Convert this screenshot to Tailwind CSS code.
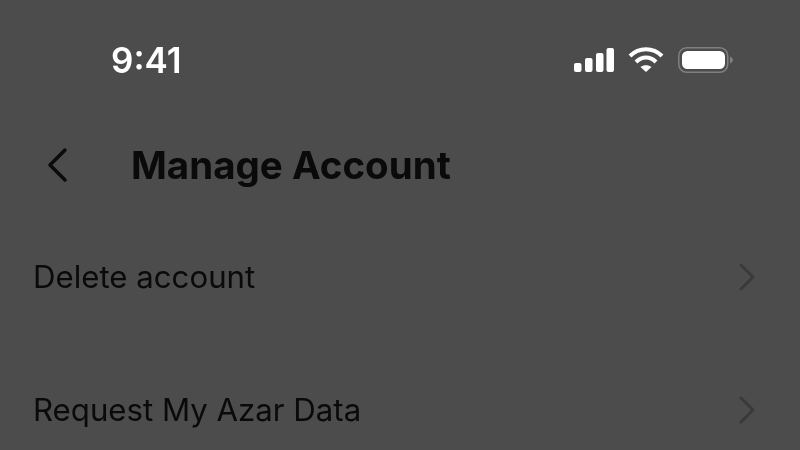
<!DOCTYPE html>
<html lang="en">
<head>
  <meta charset="UTF-8">
  <title>Manage Account</title>
  <script src="https://cdn.jsdelivr.net/npm/@tailwindcss/browser@4"></script>
</head>
<body class="w-[800px] h-[450px] overflow-hidden bg-[#4c4c4c] font-['Inter',sans-serif]">
  <div class="blur-[0.5px]">
    <!-- status bar -->
    <div class="flex items-center justify-between h-[40px] mt-[40px] pl-[111px] pr-[66px]">
      <span class="text-[35px] leading-[40px] font-semibold text-white">9:41</span>
      <div class="flex items-center gap-[14px]">
        <svg width="40" height="25" viewBox="0 0 40 25" fill="#fff">
          <rect x="0" y="15" width="7.500" height="9" rx="2"/>
          <rect x="11" y="10" width="7.500" height="14" rx="2"/>
          <rect x="22" y="5" width="7.500" height="19" rx="2"/>
          <rect x="32.500" y="0" width="7.500" height="24" rx="2"/>
        </svg>
        <svg width="36" height="26" viewBox="0 0 36 26" fill="none" stroke="#fff" stroke-width="4">
          <path d="M2 9C11 0 25 0 34 9"/>
          <path d="M8 15C14 9 22 9 28 15"/>
          <path d="M18 25L12.500 20C15.500 17.500 20.500 17.500 23.500 20Z" fill="#fff" stroke="none"/>
        </svg>
        <svg width="56" height="26" viewBox="0 0 56 26" fill="none">
          <rect x="0.750" y="0.750" width="49" height="24.500" rx="8" stroke="#808080" stroke-width="1.500"/>
          <rect x="4" y="4" width="43" height="18" rx="5.500" fill="#fff"/>
          <path d="M52 9.500C54 10.500 55 12 55 13C55 14 54 15.500 52 16.500Z" fill="#808080"/>
        </svg>
      </div>
    </div>
    <!-- header -->
    <div class="flex items-center h-[50px] mt-[60px] pl-[46px]">
      <svg width="24" height="36" viewBox="0 0 24 36" fill="none" stroke="#0b0b0b" stroke-width="3.500" stroke-linecap="round" stroke-linejoin="round">
        <path d="M19 3L4 18L19 33"/>
      </svg>
      <h1 class="ml-[61px] text-[38.500px] leading-[50px] font-bold text-[#0a0a0a]">Manage Account</h1>
    </div>
    <!-- rows -->
    <div class="mt-[62px] flex items-center justify-between h-[50px] pl-[33px] pr-[45px]">
      <span class="text-[31.200px] text-[#0a0a0a]">Delete account</span>
      <svg width="16" height="28" viewBox="0 0 16 28" fill="none" stroke="#3a3a3a" stroke-width="3" stroke-linecap="round" stroke-linejoin="round">
        <path d="M2 2L14 14L2 26"/>
      </svg>
    </div>
    <div class="mt-[83px] flex items-center justify-between h-[50px] pl-[33px] pr-[45px]">
      <span class="text-[31.200px] text-[#0a0a0a]">Request My Azar Data</span>
      <svg width="16" height="28" viewBox="0 0 16 28" fill="none" stroke="#3a3a3a" stroke-width="3" stroke-linecap="round" stroke-linejoin="round">
        <path d="M2 2L14 14L2 26"/>
      </svg>
    </div>
  </div>
</body>
</html>
